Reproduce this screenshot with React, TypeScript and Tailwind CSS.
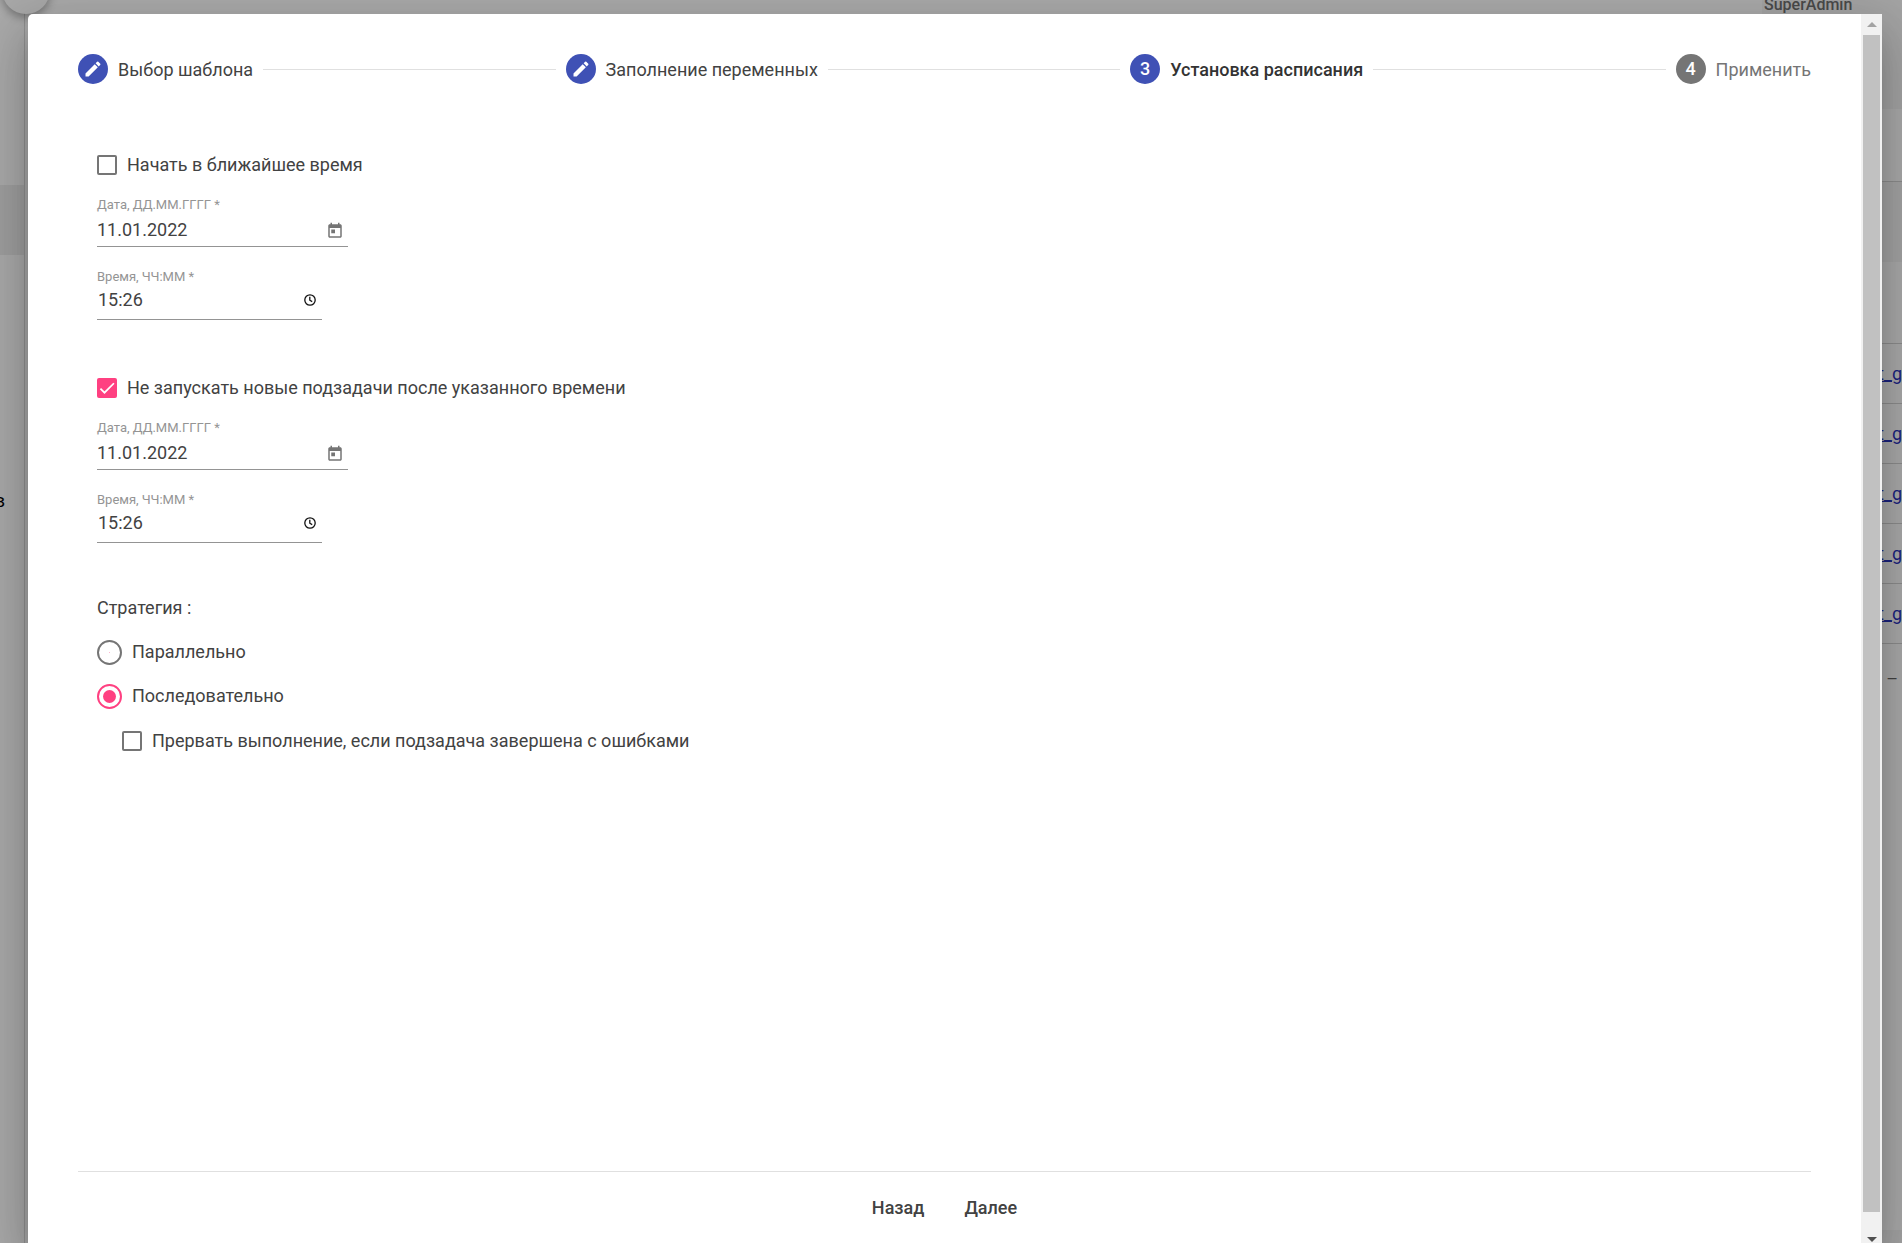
import React from 'react';
import { MdEdit } from 'react-icons/md';

const steps = [
  { label: 'Выбор шаблона', state: 'done' },
  { label: 'Заполнение переменных', state: 'done' },
  { label: 'Установка расписания', state: 'active' },
  { label: 'Применить', state: 'todo' },
];

const rows = ['g1', 'g2', 'g3', 'g4', 'g5'];

const Stepper = () => (
  <ol className="flex items-center gap-[10px] h-[30px]">
    {steps.map((step, index) => (
      <React.Fragment key={step.label}>
        {index > 0 && <li aria-hidden="true" className="flex-1 h-px bg-[#e0e0e0]"></li>}
        <li className="flex items-center gap-[10px]" aria-current={step.state === 'active' ? 'step' : undefined}>
          <span
            className={`flex items-center justify-center w-[30px] h-[30px] rounded-full text-white text-[18px] font-medium ${
              step.state === 'todo' ? 'bg-[#757575]' : 'bg-[#3f51b5]'
            }`}
          >
            {step.state === 'done' ? <MdEdit className="w-5 h-5" /> : index + 1}
          </span>
          <span
            className={
              step.state === 'active'
                ? 'pt-0.5 font-medium text-[#333333]'
                : step.state === 'todo'
                  ? 'pt-0.5 text-[#757575]'
                  : 'pt-0.5 text-[#424242]'
            }
          >
            {step.label}
          </span>
        </li>
      </React.Fragment>
    ))}
  </ol>
);

const Checkbox = ({ label, defaultChecked = false }: { label: string; defaultChecked?: boolean }) => (
  <label className="flex items-center gap-[10px] h-[30px] w-fit">
    <span className="grid w-5 h-5">
      <input
        type="checkbox"
        defaultChecked={defaultChecked}
        className="peer col-start-1 row-start-1 appearance-none w-5 h-5 rounded-[2px] border-2 border-[#757575] checked:border-[#ff4081] checked:bg-[#ff4081]"
      />
      <svg
        viewBox="0 0 24 24"
        className="col-start-1 row-start-1 w-5 h-5 pointer-events-none hidden peer-checked:block"
        fill="none"
        stroke="white"
        strokeWidth="2.1"
      >
        <path d="M4.1 12.7 9 17.6 20.3 6.3" />
      </svg>
    </span>
    {label}
  </label>
);

const Radio = ({ label, defaultChecked = false }: { label: string; defaultChecked?: boolean }) => (
  <label className="flex items-center gap-[10px] h-11 w-fit">
    <span className="grid place-items-center w-[25px] h-[25px]">
      <input
        type="radio"
        name="strategy"
        defaultChecked={defaultChecked}
        className="peer col-start-1 row-start-1 appearance-none w-[25px] h-[25px] rounded-full border-2 border-[#757575] checked:border-[#ff4081]"
      />
      <span className="col-start-1 row-start-1 w-px h-px rounded-full bg-[#ff4081]/50 pointer-events-none peer-checked:w-[13px] peer-checked:h-[13px] peer-checked:bg-[#ff4081]"></span>
    </span>
    {label}
  </label>
);

const CalendarIcon = () => (
  <svg viewBox="0 0 24 24" className="w-[18px] h-[18px]" fill="#757575">
    <path d="M19 3h-1V1h-2v2H8V1H6v2H5c-1.11 0-1.99.9-1.99 2L3 19c0 1.1.89 2 2 2h14c1.1 0 2-.9 2-2V5c0-1.1-.9-2-2-2zm0 16H5V8h14v11zM7 10h5v5H7z" />
  </svg>
);

const ClockIcon = () => (
  <svg viewBox="0 0 12 12" className="w-3 h-3" fill="none" stroke="#111" strokeWidth="1.3">
    <circle cx="6" cy="6" r="5.2" />
    <path d="M5.8 2.8v3.4L8.2 7.6" />
  </svg>
);

const DateTimeFields = ({ id }: { id: string }) => (
  <>
    <div className="w-[251px] h-[72px]">
      <label htmlFor={`${id}-date`} className="block text-[13px] leading-4 text-[#949494]">
        Дата, ДД.ММ.ГГГГ *
      </label>
      <div className="flex items-center h-[34px] border-b border-[#949494] pr-1">
        <input id={`${id}-date`} type="text" defaultValue="11.01.2022" className="flex-1 min-w-0 h-6 outline-none" />
        <button type="button" aria-label="Открыть календарь" className="pt-0.5">
          <CalendarIcon />
        </button>
      </div>
    </div>
    <div className="w-[225px] h-[51px]">
      <label htmlFor={`${id}-time`} className="block text-[13px] leading-4 text-[#949494]">
        Время, ЧЧ:ММ *
      </label>
      <div className="flex items-center h-[35px] border-b border-[#949494] pl-px pr-[6px] pb-1">
        <input id={`${id}-time`} type="text" defaultValue="15:26" className="flex-1 min-w-0 h-6 outline-none" />
        <button type="button" aria-label="Выбрать время">
          <ClockIcon />
        </button>
      </div>
    </div>
  </>
);

const Backdrop = () => (
  <div className="flex flex-col min-h-screen bg-[#aaaaaa]" aria-hidden="true">
    <div className="flex flex-1">
      <div className="w-[25px] border-r border-[#929292] pt-[185px] overflow-hidden">
        <div className="h-[70px] bg-[#9f9f9f]"></div>
        <div className="flex justify-end w-[5px] pt-[236px] leading-5 text-black">в</div>
      </div>
      <div className="flex-1"></div>
      <div className="flex flex-col w-[140px] bg-[#a4a4a4]">
        <div className="flex h-[109px]">
          <span className="-mt-[5px] pl-[2px] text-base leading-5 font-medium text-[#4a4a4a]">SuperAdmin</span>
        </div>
        <div className="h-[73px] bg-[#aaaaaa] border-b border-[#8d8d8d]"></div>
        <div className="h-[80px]"></div>
        <div className="h-[82px] bg-[#aaaaaa] border-b border-[#8d8d8d]"></div>
        {rows.map((row) => (
          <div key={row} className="flex items-center justify-end h-[60px] bg-[#aaaaaa] border-b border-[#8d8d8d]">
            <a href="#" className="text-[#1a237e] underline">
              test_g
            </a>
          </div>
        ))}
        <div className="flex items-center justify-end h-[69px] pr-[4px] bg-[#aaaaaa]">–</div>
        <div className="flex-1 bg-[#aaaaaa]"></div>
        <div className="h-[13px]"></div>
      </div>
    </div>
  </div>
);

const Scrollbar = () => (
  <div className="flex flex-col items-center w-[21px] bg-[#f1f1f1]" aria-hidden="true">
    <div className="flex items-center justify-center h-[21px]">
      <svg viewBox="0 0 10 5" className="w-[10px] h-[5px]" fill="#a3a3a3">
        <path d="M5 0 10 5H0z" />
      </svg>
    </div>
    <div className="flex-1 w-[17px] bg-[#c1c1c1]"></div>
    <div className="flex items-end justify-center h-[31px] pb-px">
      <svg viewBox="0 0 10 5" className="w-[10px] h-[5px]" fill="#505050">
        <path d="M0 0H10L5 5z" />
      </svg>
    </div>
  </div>
);

export default function App() {
  return (
    <div className="relative min-h-screen overflow-hidden text-[18px] leading-6 font-['Roboto',sans-serif] text-[#424242]">
      <Backdrop />
      <div className="absolute -top-[34px] left-[2px] w-12 h-12 rounded-full bg-[#a8a8a8] shadow-[0_4px_8px_rgba(0,0,0,0.3)]"></div>
      <div
        role="dialog"
        aria-modal="true"
        className="absolute top-[14px] bottom-0 left-7 right-5 flex bg-white rounded-tl-[5px] shadow-[0_14px_19px_-9px_rgba(0,0,0,0.2),0_30px_48px_4px_rgba(0,0,0,0.14),0_11px_58px_10px_rgba(0,0,0,0.12)]"
      >
        <form className="flex-1 flex flex-col px-[50px] pt-10">
          <Stepper />
          <div className="flex-1 px-[19px] pt-[66px]">
            <Checkbox label="Начать в ближайшее время" />
            <div className="pt-[17px]">
              <DateTimeFields id="start" />
            </div>
            <div className="pt-[53px]">
              <Checkbox label="Не запускать новые подзадачи после указанного времени" defaultChecked />
            </div>
            <div className="pt-[17px]">
              <DateTimeFields id="stop" />
            </div>
            <fieldset className="pt-[53px]">
              <legend className="contents">Стратегия :</legend>
              <div className="pt-[10px]">
                <Radio label="Параллельно" />
                <Radio label="Последовательно" defaultChecked />
              </div>
            </fieldset>
            <div className="pl-[25px] pt-2">
              <Checkbox label="Прервать выполнение, если подзадача завершена с ошибками" />
            </div>
          </div>
          <div className="flex justify-center h-[72px] pt-[24px] gap-2 border-t border-[#e0e0e0] font-medium">
            <button type="button" className="h-6 px-4">
              Назад
            </button>
            <button type="button" className="h-6 px-4">
              Далее
            </button>
          </div>
        </form>
        <Scrollbar />
      </div>
    </div>
  );
}
